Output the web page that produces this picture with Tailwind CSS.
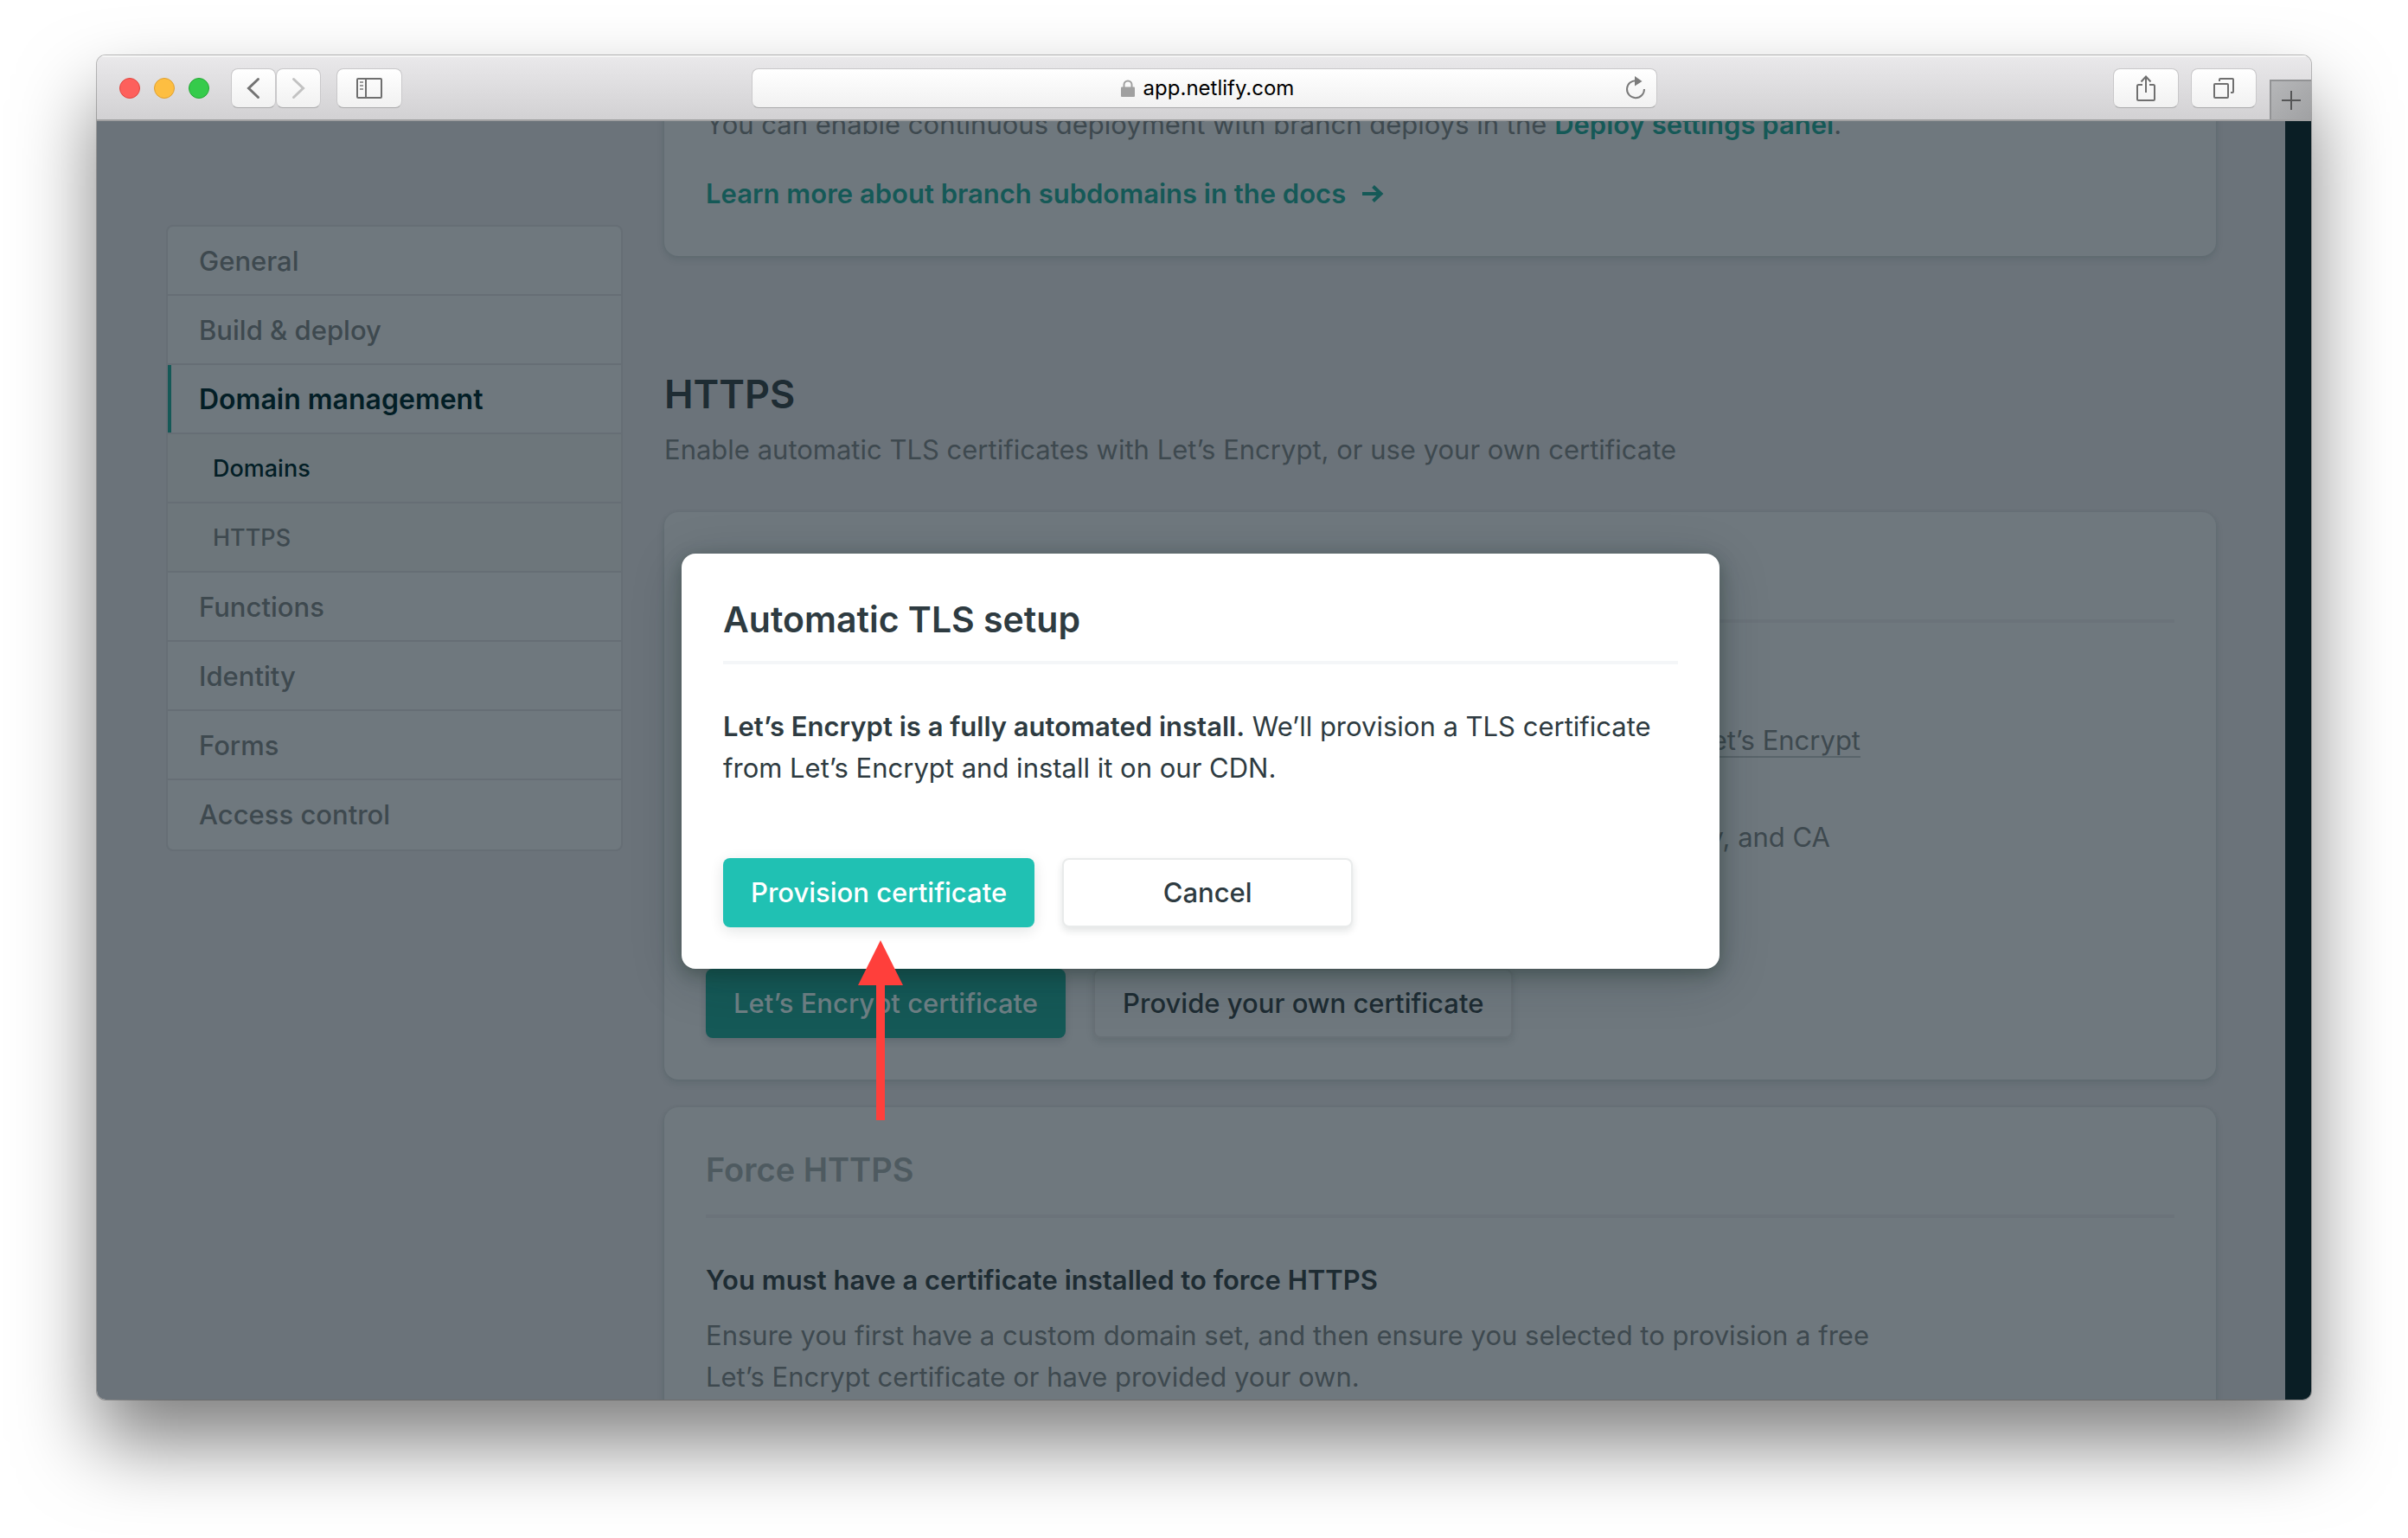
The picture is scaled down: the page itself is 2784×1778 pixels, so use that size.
<!DOCTYPE html>
<html lang="en">
<head>
<meta charset="utf-8">
<title>app.netlify.com</title>
<script src="https://cdn.jsdelivr.net/npm/@tailwindcss/browser@4"></script>
</head>
<body class="bg-white font-[Inter,'Liberation_Sans',sans-serif] text-[31px] leading-[48px]">
<div class="flex h-screen flex-col px-28 pt-16 pb-40">
  <div class="flex min-h-0 flex-1 flex-col overflow-hidden rounded-[10px] shadow-[0_0_0_1px_rgba(0,0,0,0.25),0_50px_90px_rgba(0,0,0,0.5)]">

    <!-- Browser toolbar -->
    <header class="grid h-[76px] shrink-0 grid-cols-[1fr_1047px_1fr] items-center border-b-2 border-[#a0a0a1] bg-linear-to-b from-[#eae9eb] to-[#d2d1d3] pt-0.5 shadow-[inset_0_2px_0_#f5f5f5]">
      <div class="flex items-center pl-[26px]">
        <div class="flex gap-4">
          <span class="size-6 rounded-full border border-[#e2463f] bg-[#fd605c]"></span>
          <span class="size-6 rounded-full border border-[#dfa032] bg-[#fdbe41]"></span>
          <span class="size-6 rounded-full border border-[#24a834] bg-[#35cb4b]"></span>
        </div>
        <button aria-label="Back" class="ml-[25px] flex h-[46px] w-[52px] items-center justify-center rounded-lg border border-[#c9c8ca] border-b-[#a9a9aa] bg-linear-to-b from-white to-[#f1f1f1]">
          <svg width="16" height="26" viewBox="0 0 16 26" fill="none" stroke="#737373" stroke-width="3" stroke-linecap="round"><path d="M13.500 2.500 L2.500 13 L13.500 23.500"/></svg>
        </button>
        <button aria-label="Forward" class="flex h-[46px] w-[52px] items-center justify-center rounded-lg border border-[#c9c8ca] border-b-[#a9a9aa] bg-linear-to-b from-white to-[#f1f1f1]">
          <svg width="16" height="26" viewBox="0 0 16 26" fill="none" stroke="#c2c2c2" stroke-width="3" stroke-linecap="round"><path d="M2.500 2.500 L13.500 13 L2.500 23.500"/></svg>
        </button>
        <button aria-label="Show sidebar" class="ml-[18px] flex h-[46px] w-[76px] items-center justify-center rounded-lg border border-[#c9c8ca] border-b-[#a9a9aa] bg-linear-to-b from-white to-[#f1f1f1]">
          <svg width="30" height="24" viewBox="0 0 30 24" fill="none" stroke="#6f6f6f" stroke-width="2"><rect x="1" y="1" width="28" height="22" rx="1"/><path d="M11 1V23"/><path stroke="#9a9a9a" d="M4 5H8M4 9H8M4 13H8"/></svg>
        </button>
      </div>
      <div class="flex h-[46px] items-center rounded-lg border border-[#c9c8ca] border-b-[#a9a9aa] bg-linear-to-b from-white to-[#f1f1f1] pr-3 pl-10">
        <div class="flex flex-1 items-center justify-center gap-[10px] pl-1">
          <svg width="16" height="20" viewBox="0 0 16 20"><path d="M3.500 9V6a4.500 4.500 0 0 1 9 0v3" fill="none" stroke="#a0a0a0" stroke-width="2"/><rect y="8.500" width="16" height="11.500" rx="1" fill="#a0a0a0"/></svg>
          <span class="text-2xl text-black">app.netlify.com</span>
        </div>
        <button aria-label="Reload">
          <svg width="24" height="28" viewBox="0 0 24 28"><path d="M13 5.200A10 10 0 1 0 22 15" fill="none" stroke="#7b7b7b" stroke-width="2"/><path d="M11 0L19.500 6L11 11.500Z" fill="#7b7b7b"/></svg>
        </button>
      </div>
      <div class="flex items-center justify-end self-stretch">
        <button aria-label="Share" class="flex h-[46px] w-[76px] items-center justify-center rounded-lg border border-[#c9c8ca] border-b-[#a9a9aa] bg-linear-to-b from-white to-[#f1f1f1]">
          <svg width="22" height="32" viewBox="0 0 22 32" fill="none" stroke="#6f6f6f" stroke-width="2"><path d="M7 12H2.500Q1 12 1 13.500V28.500Q1 30 2.500 30H19.500Q21 30 21 28.500V13.500Q21 12 19.500 12H15"/><path d="M11 21V2.500M5.500 8.500L11 2.500L16.500 8.500"/></svg>
        </button>
        <button aria-label="Show all tabs" class="mr-[15px] ml-[14px] flex h-[46px] w-[76px] items-center justify-center rounded-lg border border-[#c9c8ca] border-b-[#a9a9aa] bg-linear-to-b from-white to-[#f1f1f1]">
          <svg width="24" height="24" viewBox="0 0 24 24" fill="none" stroke="#6f6f6f" stroke-width="2"><rect x="1" y="7" width="16" height="16" rx="1"/><path d="M7 4V2Q7 1 8 1H22Q23 1 23 2V16Q23 17 22 17H20"/></svg>
        </button>
        <button aria-label="New tab" class="flex h-[46px] w-12 items-center justify-center self-end border-t-2 border-l-2 border-[#929395] bg-linear-to-br from-[#b6b7b9] to-[#a0a1a3]">
          <svg width="22" height="22" viewBox="0 0 22 22" stroke="#555657" stroke-width="2"><path d="M11 0V22M0 11H22"/></svg>
        </button>
      </div>
    </header>

    <!-- Page viewport -->
    <div class="relative min-h-0 flex-1 overflow-hidden border-r-[30px] border-[#0a1e25] bg-[#6b737a]">
      <div class="flex items-start gap-12 px-20">

        <nav class="mt-[120px] w-[528px] shrink-0 rounded-lg border-2 border-[#666e75] bg-[#6f787e] font-medium text-[#3e494f]">
          <a href="#" class="flex h-20 items-center border-b-2 border-[#666e75] pt-0.5 pl-9">General</a>
          <a href="#" class="flex h-20 items-center border-b-2 border-[#666e75] pt-0.5 pl-9">Build &amp; deploy</a>
          <div class="border-b-2 border-[#666e75]"><a href="#" class="flex h-[78px] items-center border-l-4 border-[#155957] pt-0.5 pl-8 text-[32px] font-semibold text-[#031e26]">Domain management</a></div>
          <a href="#" class="flex h-20 items-center border-b-2 border-[#666e75] bg-[#6d767b] pt-0.5 pl-[52px] text-[27px] text-[#031e26]">Domains</a>
          <a href="#" class="flex h-20 items-center border-b-2 border-[#666e75] bg-[#6d767b] pt-0.5 pl-[52px] text-[27px]">HTTPS</a>
          <a href="#" class="flex h-20 items-center border-b-2 border-[#666e75] pt-0.5 pl-9">Functions</a>
          <a href="#" class="flex h-20 items-center border-b-2 border-[#666e75] pt-0.5 pl-9">Identity</a>
          <a href="#" class="flex h-20 items-center border-b-2 border-[#666e75] pt-0.5 pl-9">Forms</a>
          <a href="#" class="flex h-20 items-center pl-9">Access control</a>
        </nav>

        <main class="min-w-0 flex-1 text-[#3e494f]">
          <section class="-mt-5 rounded-b-2xl bg-[#6f787e] px-12 pb-12 shadow-[0_4px_8px_rgba(14,50,50,0.12),0_0_4px_rgba(14,60,50,0.06)]">
            <p>You can enable continuous deployment with branch deploys in the <a href="#" class="font-semibold text-[#155957]">Deploy settings panel</a>.</p>
            <a href="#" class="mt-8 flex items-center gap-[18px] font-semibold text-[#155957]">Learn more about branch subdomains in the docs
              <svg width="26" height="20" viewBox="0 0 26 20" fill="none" stroke="#155957" stroke-width="4"><path d="M1 10H23M13.500 1.500L22.500 10L13.500 18.500"/></svg>
            </a>
          </section>

          <h2 class="mt-[130px] text-[45px] leading-[60px] font-semibold text-[#1e2c33]">HTTPS</h2>
          <p class="mt-2.5">Enable automatic TLS certificates with Let’s Encrypt, or use your own certificate</p>

          <section class="mt-12 rounded-2xl bg-[#6f787e] px-12 pt-[124px] pb-12 shadow-[0_4px_8px_rgba(14,50,50,0.12),0_0_4px_rgba(14,60,50,0.06)]">
            <div class="border-t-4 border-[#6b737a] pt-28 text-right">
              <p class="w-[1335px]"><a href="#" class="inline-block h-11 border-b-2 border-[#59646a]">Let’s Encrypt</a></p>
              <p class="mt-16 w-[1300px]">key, and CA</p>
            </div>
            <div class="mt-32 flex gap-8">
              <button class="h-20 rounded-lg bg-[#155957] px-8 font-medium text-[#6f8085] shadow-[0_4px_8px_rgba(14,30,37,0.15)]">Let’s Encrypt certificate</button>
              <button class="h-20 rounded-lg border-2 border-[#687076] px-8 font-medium text-[#1e2c33] shadow-[0_4px_8px_rgba(14,30,37,0.12)]">Provide your own certificate</button>
            </div>
          </section>

          <section class="mt-8 rounded-2xl bg-[#6f787e] p-12 shadow-[0_4px_8px_rgba(14,50,50,0.12),0_0_4px_rgba(14,60,50,0.06)]">
            <h3 class="border-b-4 border-[#6b737a] pb-7 text-[38px] font-semibold text-[#4e5a60]">Force HTTPS</h3>
            <p class="mt-12 font-semibold text-[#1e2c33]">You must have a certificate installed to force HTTPS</p>
            <p class="mt-4 max-w-[1360px]">Ensure you first have a custom domain set, and then ensure you selected to provision a free Let’s Encrypt certificate or have provided your own.</p>
          </section>
        </main>
      </div>

      <!-- Dialog -->
      <div role="dialog" aria-labelledby="dialog-title" class="absolute top-[500px] left-[676px] w-[1200px] rounded-2xl bg-white p-12 text-[#2e3b41] shadow-[0_6px_20px_rgba(14,40,30,0.35),0_12px_60px_rgba(14,30,37,0.2)]">
        <h2 id="dialog-title" class="border-b-4 border-[#f4f6f8] pb-5 text-[41px] leading-[56px] font-semibold">Automatic TLS setup</h2>
        <p class="mt-12"><strong class="font-semibold">Let’s Encrypt is a fully automated install.</strong> We’ll provision a TLS certificate from Let’s Encrypt and install it on our CDN.</p>
        <div class="mt-20 flex gap-8">
          <button class="h-20 rounded-lg bg-[#20c1b3] px-8 font-medium text-white shadow-[0_4px_16px_rgba(14,30,37,0.12)]">Provision certificate</button>
          <button class="h-20 w-[336px] rounded-lg border-2 border-[#e9ebeb] bg-white font-medium shadow-[0_4px_8px_rgba(14,30,37,0.12)]">Cancel</button>
        </div>
        <!-- Arrow pointing at the primary button -->
        <svg class="absolute top-[447px] left-[203px]" width="54" height="208" viewBox="0 0 54 208" fill="#ff3f3b"><path d="M27 0L53 52H32V208H22V52H1Z"/></svg>
      </div>
    </div>
  </div>
</div>
</body>
</html>
